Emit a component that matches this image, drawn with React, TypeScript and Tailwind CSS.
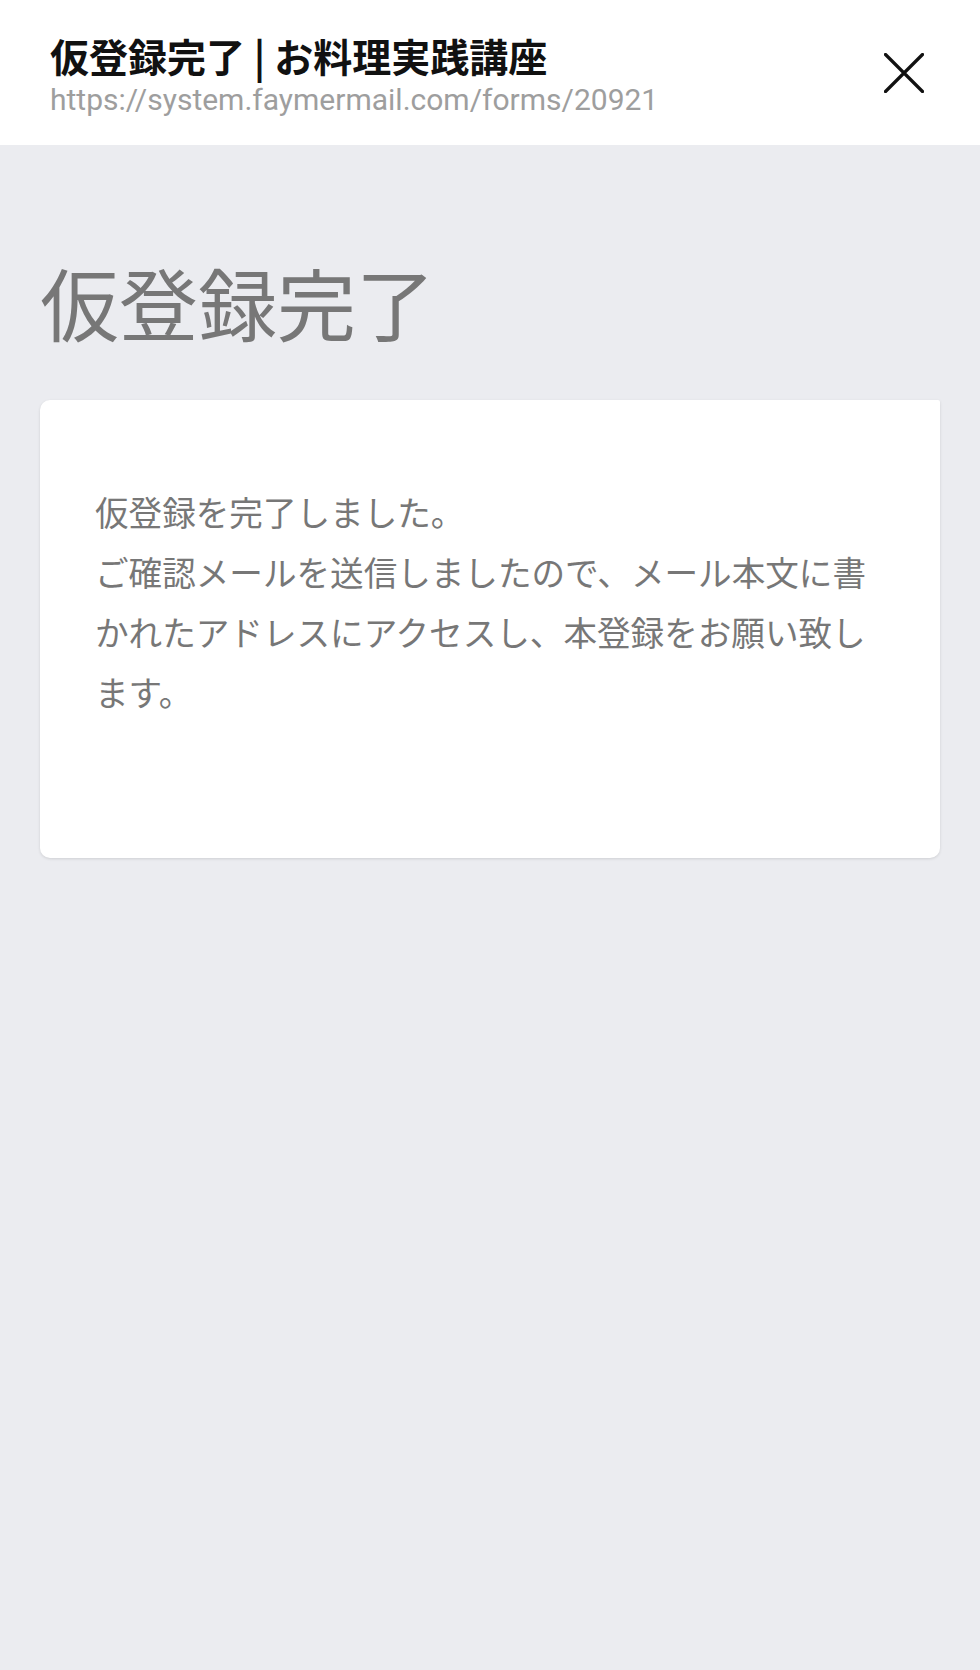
export default function App() {
  return (
    <div className="min-h-[1670px] bg-[#ebecf0]">
      {/* Top bar of the in-app browser */}
      <header className="h-[145px] bg-white flex items-center justify-between pl-[50px] pr-[56px] pt-[3px]">
        <div className="flex flex-col">
          <div
            className="text-[39px] leading-[46px] font-bold text-[#111]"
            style={{ fontFamily: '"Noto Sans CJK JP", sans-serif' }}
          >
            仮登録完了 | お料理実践講座
          </div>
          <div
            className="text-[30px] leading-[34px] mt-[5px] text-[#9e9e9e]"
            style={{ fontFamily: 'Roboto, "Noto Sans CJK JP", sans-serif' }}
          >
            https://system.faymermail.com/forms/20921
          </div>
        </div>
        <button aria-label="閉じる" className="w-[40px] h-[40px] flex items-center justify-center -mt-[3px]">
          <svg width="40" height="40" viewBox="0 0 40 40" fill="none">
            <path d="M1.5 1.5L38.5 38.5M38.5 1.5L1.5 38.5" stroke="#111" strokeWidth="3.2" strokeLinecap="round" />
          </svg>
        </button>
      </header>

      <main className="px-[40px]" style={{ fontFamily: '"Noto Sans CJK JP", sans-serif' }}>
        <h1 className="mt-[117px] text-[79px] leading-[79px] font-normal text-[#777]">仮登録完了</h1>

        <div className="mt-[59px] bg-white rounded-[10px] rounded-tr-[2px] shadow-[0_1px_3px_rgba(0,0,0,0.12)] pl-[55px] pr-[56px] pt-[82px] pb-[136px]">
          <p className="text-[33.6px] leading-[60px] text-[#777]">
            仮登録を完了しました。
            <br />
            ご確認メールを送信しましたので、メール本文に書かれたアドレスにアクセスし、本登録をお願い致します。
          </p>
        </div>
      </main>
    </div>
  );
}
